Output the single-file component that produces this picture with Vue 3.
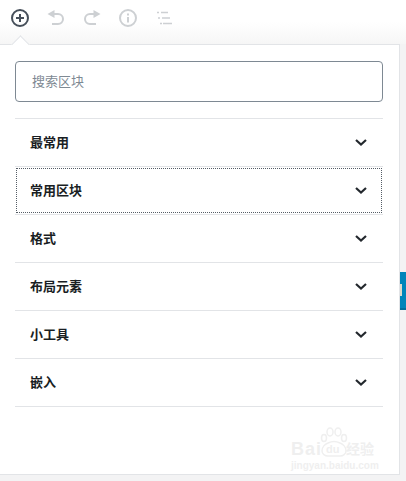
<script setup>
const groups = [
  { name: '最常用' },
  { name: '常用区块', focused: true },
  { name: '格式' },
  { name: '布局元素' },
  { name: '小工具' },
  { name: '嵌入' }
]
</script>

<template>
  <div class="page">
    <div class="toolbar">
      <svg class="tool" width="24" height="24" viewBox="0 0 24 24" fill="none" stroke="#464f5a">
        <circle cx="12" cy="12" r="8" stroke-width="2" />
        <path d="M12 8v8M8 12h8" stroke-width="2" />
      </svg>
      <svg class="tool" width="24" height="24" viewBox="0 0 24 24" fill="none" stroke="#cdd0d3" stroke-width="2">
        <path d="M10.500 4 3.500 8l7 4z" fill="#cdd0d3" stroke="none" />
        <path d="M9 8h5a5 5 0 0 1 0 10H8" />
      </svg>
      <svg class="tool" width="24" height="24" viewBox="0 0 24 24" fill="none" stroke="#cdd0d3" stroke-width="2">
        <path d="M13.500 4l7 4-7 4z" fill="#cdd0d3" stroke="none" />
        <path d="M15 8h-5a5 5 0 0 0 0 10h6" />
      </svg>
      <svg class="tool" width="24" height="24" viewBox="0 0 24 24" fill="none" stroke="#cdd0d3" stroke-width="2">
        <circle cx="12" cy="12" r="8" />
        <path d="M12 11v5.500M12 7.500v2" />
      </svg>
      <svg class="tool" width="24" height="24" viewBox="0 0 24 24" fill="none" stroke="#cdd0d3" stroke-width="1.500">
        <path d="M5 6.500h2M9 6.500h7M6 12h2M10 12h8M8 17.500h2M11 17.500h9" />
      </svg>
    </div>

    <div class="body">
      <div class="panel">
        <span class="arrow"></span>
        <div class="search">
          <input class="search-input" type="text" placeholder="搜索区块" />
        </div>
        <div class="groups">
          <div v-for="g in groups" :key="g.name" class="group">
            <div class="group-head" :class="{ focused: g.focused }">
              <span>{{ g.name }}</span>
              <svg width="20" height="20" viewBox="0 0 20 20" fill="none" stroke="#23282d" stroke-width="2.200">
                <path d="M5 8l5 4.500L15 8" />
              </svg>
            </div>
          </div>
        </div>
        <div class="watermark">
          <svg class="paw" width="30" height="30" viewBox="0 0 30 30" fill="none" stroke="#efefef" stroke-width="1.500">
            <ellipse cx="5" cy="11" rx="2.500" ry="3.500" />
            <ellipse cx="11" cy="5" rx="3" ry="4" />
            <ellipse cx="19" cy="5" rx="3" ry="4" />
            <ellipse cx="25" cy="11" rx="2.500" ry="3.500" />
            <path d="M9 16c4-2 8-2 12 0 3 1 6 4 6 8 0 3-3 5-6 5H9c-3 0-6-2-6-5 0-4 3-7 6-8z" />
          </svg>
          <div class="mark-top">
            <span class="mark-bai">Bai</span>
            <span class="mark-du">du</span>
            <span class="mark-cn">经验</span>
          </div>
          <div class="mark-url">jingyan.baidu.com</div>
        </div>
      </div>
      <div class="side">
        <div class="side-bar">
          <span class="side-tab"></span>
        </div>
      </div>
    </div>
  </div>
</template>

<style scoped>
.page {
  width: 406px;
  height: 481px;
  display: flex;
  flex-direction: column;
  overflow: hidden;
  background: #f3f3f4;
  font-family: "Noto Sans CJK SC", "Liberation Sans", sans-serif;
}

.toolbar {
  height: 44px;
  box-sizing: border-box;
  padding: 6px 0 0 8px;
  display: flex;
  align-items: flex-start;
  gap: 12px;
  background: linear-gradient(to bottom, #fff 50%, #f6f6f6);
}

.tool {
  flex: none;
}

.body {
  flex: 1;
  display: flex;
  min-height: 0;
}

.panel {
  width: 400px;
  height: 431px;
  box-sizing: border-box;
  position: relative;
  background: #fff;
  border-top: 1px solid #e2e4e7;
  border-right: 1px solid #e2e4e7;
  border-bottom: 1px solid #e2e4e7;
}

.arrow {
  position: absolute;
  left: 14px;
  top: -7px;
  width: 12px;
  height: 12px;
  background: #fff;
  border-top: 1px solid #e2e4e7;
  border-left: 1px solid #e2e4e7;
  transform: rotate(45deg);
}

.search {
  padding: 16px 16px 16px 15px;
}

.search-input {
  width: 100%;
  height: 41px;
  box-sizing: border-box;
  padding: 0 16px 2px;
  display: block;
  border: 1px solid #7e8993;
  border-radius: 4px;
  outline: none;
  font-family: inherit;
  font-size: 13px;
  color: #23282d;
  background: #fff;
}

.search-input::placeholder {
  color: #7e8993;
  opacity: 1;
}

.groups {
  margin: 0 16px 0 15px;
  border-top: 1px solid #e2e4e7;
}

.group {
  height: 48px;
  box-sizing: border-box;
  border-bottom: 1px solid #e2e4e7;
  display: flex;
}

.group-head {
  flex: 1;
  margin: 1px;
  padding: 0 11px 2px 14px;
  display: flex;
  align-items: center;
  justify-content: space-between;
  font-size: 13px;
  font-weight: 600;
  color: #191e23;
}

.group-head.focused {
  outline: 1px dotted #555d66;
  outline-offset: -1px;
}

.watermark {
  position: absolute;
  left: 291px;
  top: 382px;
  width: 90px;
  color: #efefef;
  font-family: "Liberation Sans", "Noto Sans CJK SC", sans-serif;
  font-weight: 700;
}

.paw {
  display: block;
  margin-left: 28px;
}

.mark-top {
  margin-top: -16px;
  height: 16px;
  display: flex;
  align-items: center;
  white-space: nowrap;
  line-height: 16px;
}

.mark-bai {
  width: 33px;
  font-size: 18px;
  letter-spacing: 1px;
}

.mark-du {
  width: 22px;
  padding-left: 2px;
  box-sizing: border-box;
  font-size: 11px;
}

.mark-cn {
  font-size: 14px;
}

.mark-url {
  margin-top: 3px;
  font-size: 10px;
  line-height: 11px;
  white-space: nowrap;
}

.side {
  flex: 1;
  padding-top: 228px;
}

.side-bar {
  height: 38px;
  box-sizing: border-box;
  display: flex;
  align-items: center;
  background: #0085ba;
  border-bottom: 2px solid #006f9c;
}

.side-tab {
  width: 2px;
  height: 12px;
  background: #dcdacb;
}
</style>
